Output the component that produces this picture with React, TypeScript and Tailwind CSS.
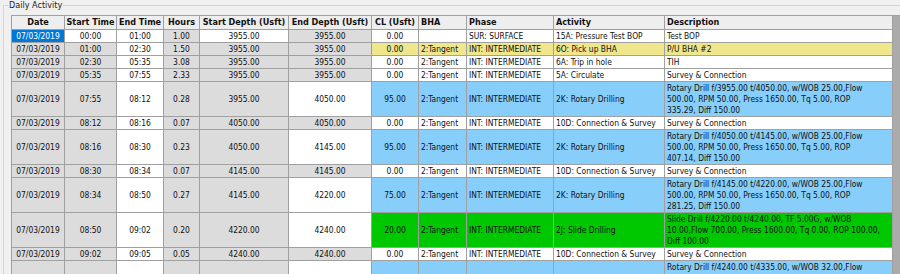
import React from "react";

type Tone = "w" | "y" | "b" | "g";
type Row = {
  d: string; st: string; et: string; h: string; sd: string; ed: string;
  cl: string; bha: string; ph: string; act: string; desc: string[];
  c: Tone; tall?: boolean; first?: boolean; edW?: boolean;
};

const rows: Row[] = [
  { d: "07/03/2019", st: "00:00", et: "01:00", h: "1.00", sd: "3955.00", ed: "3955.00", cl: "0.00", bha: "", ph: "SUR: SURFACE", act: "15A: Pressure Test BOP", desc: ["Test BOP"], c: "w", first: true },
  { d: "07/03/2019", st: "01:00", et: "02:30", h: "1.50", sd: "3955.00", ed: "3955.00", cl: "0.00", bha: "2:Tangent", ph: "INT: INTERMEDIATE", act: "6O: Pick up BHA", desc: ["P/U BHA #2"], c: "y" },
  { d: "07/03/2019", st: "02:30", et: "05:35", h: "3.08", sd: "3955.00", ed: "3955.00", cl: "0.00", bha: "2:Tangent", ph: "INT: INTERMEDIATE", act: "6A: Trip in hole", desc: ["TIH"], c: "w" },
  { d: "07/03/2019", st: "05:35", et: "07:55", h: "2.33", sd: "3955.00", ed: "3955.00", cl: "0.00", bha: "2:Tangent", ph: "INT: INTERMEDIATE", act: "5A: Circulate", desc: ["Survey & Connection"], c: "w" },
  { d: "07/03/2019", st: "07:55", et: "08:12", h: "0.28", sd: "3955.00", ed: "4050.00", cl: "95.00", bha: "2:Tangent", ph: "INT: INTERMEDIATE", act: "2K: Rotary Drilling", desc: ["Rotary Drill f/3955.00 t/4050.00, w/WOB 25.00,Flow", "500.00, RPM 50.00, Press 1650.00, Tq 5.00, ROP", "335.29, Diff 150.00"], c: "b", tall: true, edW: true },
  { d: "07/03/2019", st: "08:12", et: "08:16", h: "0.07", sd: "4050.00", ed: "4050.00", cl: "0.00", bha: "2:Tangent", ph: "INT: INTERMEDIATE", act: "10D: Connection & Survey", desc: ["Survey & Connection"], c: "w" },
  { d: "07/03/2019", st: "08:16", et: "08:30", h: "0.23", sd: "4050.00", ed: "4145.00", cl: "95.00", bha: "2:Tangent", ph: "INT: INTERMEDIATE", act: "2K: Rotary Drilling", desc: ["Rotary Drill f/4050.00 t/4145.00, w/WOB 25.00,Flow", "500.00, RPM 50.00, Press 1650.00, Tq 5.00, ROP", "407.14, Diff 150.00"], c: "b", tall: true, edW: true },
  { d: "07/03/2019", st: "08:30", et: "08:34", h: "0.07", sd: "4145.00", ed: "4145.00", cl: "0.00", bha: "2:Tangent", ph: "INT: INTERMEDIATE", act: "10D: Connection & Survey", desc: ["Survey & Connection"], c: "w" },
  { d: "07/03/2019", st: "08:34", et: "08:50", h: "0.27", sd: "4145.00", ed: "4220.00", cl: "75.00", bha: "2:Tangent", ph: "INT: INTERMEDIATE", act: "2K: Rotary Drilling", desc: ["Rotary Drill f/4145.00 t/4220.00, w/WOB 25.00,Flow", "500.00, RPM 50.00, Press 1650.00, Tq 5.00, ROP", "281.25, Diff 150.00"], c: "b", tall: true, edW: true },
  { d: "07/03/2019", st: "08:50", et: "09:02", h: "0.20", sd: "4220.00", ed: "4240.00", cl: "20.00", bha: "2:Tangent", ph: "INT: INTERMEDIATE", act: "2J: Slide Drilling", desc: ["Slide Drill f/4220.00 t/4240.00, TF 5.00G, w/WOB", "10.00,Flow 700.00, Press 1600.00, Tq 0.00, ROP 100.00,", "Diff 100.00"], c: "g", tall: true, edW: true },
  { d: "07/03/2019", st: "09:02", et: "09:05", h: "0.05", sd: "4240.00", ed: "4240.00", cl: "0.00", bha: "2:Tangent", ph: "INT: INTERMEDIATE", act: "10D: Connection & Survey", desc: ["Survey & Connection"], c: "w" },
  { d: "", st: "", et: "", h: "", sd: "", ed: "", cl: "", bha: "", ph: "", act: "", desc: ["Rotary Drill f/4240.00 t/4335.00, w/WOB 32.00,Flow", "", ""], c: "b", tall: true, edW: true },
];

const toneBg: Record<Tone, string> = {
  w: "bg-white",
  y: "bg-[#f0e68c]",
  b: "bg-[#87cefa]",
  g: "bg-[#00c800]",
};

const GRAY = "bg-[#dcdcdc]";
const cellBase = "border-r border-b border-[#a0a0a0] flex items-center shrink-0 overflow-hidden whitespace-nowrap";

function Cell({ w, bg, left, children }: { w: string; bg: string; left?: boolean; children?: React.ReactNode }) {
  return (
    <div className={`${cellBase} ${w} ${bg} ${left ? "justify-start pl-[2px]" : "justify-center"}`}>
      {children}
    </div>
  );
}

function HeadCell({ w, left, children }: { w: string; left?: boolean; children: React.ReactNode }) {
  return (
    <div className={`border-r border-b border-[#a0a0a0] flex items-center shrink-0 whitespace-nowrap font-bold text-[9px] ${w} ${left ? "justify-start pl-[2px]" : "justify-center"}`}>
      {children}
    </div>
  );
}

export default function App() {
  return (
    <div className="w-[900px] h-[274px] overflow-hidden bg-[#f0f0f0] text-[#111] text-[8.4px] font-['DejaVu_Sans_Condensed',_'DejaVu_Sans',_sans-serif] [font-stretch:condensed]">
      <fieldset className="ml-[3px] border-t border-l border-[#d5d5d5] pl-[7px]">
        <legend className="ml-[-3px] px-[1px] leading-[11px] text-[9px] text-[#222]">Daily Activity</legend>
        <div className="mt-[4px] bg-[#ababab] border-l border-t border-[#a0a0a0] flex flex-col w-[900px]">
          <div className="flex h-[14px] leading-[13px] bg-[#eeeeee] w-[881px]">
            <HeadCell w="w-[53px]">Date</HeadCell>
            <HeadCell w="w-[52px]">Start Time</HeadCell>
            <HeadCell w="w-[47px]">End Time</HeadCell>
            <HeadCell w="w-[36px]">Hours</HeadCell>
            <HeadCell w="w-[89px]">Start Depth (Usft)</HeadCell>
            <HeadCell w="w-[83px]">End Depth (Usft)</HeadCell>
            <HeadCell w="w-[47px]">CL (Usft)</HeadCell>
            <HeadCell w="w-[48px]" left>BHA</HeadCell>
            <HeadCell w="w-[87px]" left>Phase</HeadCell>
            <HeadCell w="w-[111px]" left>Activity</HeadCell>
            <HeadCell w="w-[228px]" left>Description</HeadCell>
          </div>
          {rows.map((r, i) => {
            const tone = toneBg[r.c];
            return (
              <div key={i} className={`flex w-[881px] ${r.tall ? "h-[35px]" : "h-[13px]"} leading-[11px]`}>
                <div className={`${cellBase} w-[53px] justify-center ${r.first ? "bg-[#0078d7] text-white" : GRAY}`}>{r.d}</div>
                <Cell w="w-[52px]" bg={r.first ? "bg-white" : GRAY}>{r.st}</Cell>
                <Cell w="w-[47px]" bg="bg-white">{r.et}</Cell>
                <Cell w="w-[36px]" bg={GRAY}>{r.h}</Cell>
                <Cell w="w-[89px]" bg={r.first ? "bg-white" : GRAY}>{r.sd}</Cell>
                <Cell w="w-[83px]" bg={r.edW ? "bg-white" : GRAY}>{r.ed}</Cell>
                <Cell w="w-[47px]" bg={tone}>{r.cl}</Cell>
                <Cell w="w-[48px]" bg={tone} left>{r.bha}</Cell>
                <Cell w="w-[87px]" bg={tone} left>{r.ph}</Cell>
                <Cell w="w-[111px]" bg={tone} left>{r.act}</Cell>
                <div className={`${cellBase} w-[228px] ${tone} justify-start pl-[2px] ${r.tall ? "items-start pt-[1px]" : ""}`}>
                  <div className="flex flex-col">
                    {r.desc.map((l, j) => (
                      <span key={j} className="h-[11px]">{l}</span>
                    ))}
                  </div>
                </div>
              </div>
            );
          })}
        </div>
      </fieldset>
    </div>
  );
}
